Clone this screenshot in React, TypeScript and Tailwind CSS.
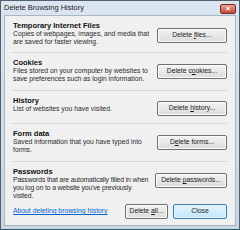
import React from "react";

const font = { fontFamily: '"Liberation Sans", Arial, sans-serif' };

function Btn({ label, w, primary }: { label: React.ReactNode; w: string; primary?: boolean }) {
  return (
    <button
      className={
        "h-[15px] shrink-0 rounded-[2px] border text-[6.8px] leading-none text-[#1a1a1a] flex items-center justify-center " +
        w +
        (primary
          ? " border-[#3c7fb1] bg-gradient-to-b from-[#eaf6fd] to-[#bee6fd] shadow-[inset_0_0_0_1px_#dff2fc]"
          : " border-[#707070] bg-gradient-to-b from-[#f2f2f2] to-[#dcdcdc] shadow-[inset_0_0_0_1px_#fbfbfb]")
      }
    >
      <span className="whitespace-pre">{label}</span>
    </button>
  );
}

function Section({
  title,
  lines,
  button,
  btnW,
  btnMt,
  pb,
  sep = true,
  tight,
}: {
  title: string;
  lines: string[];
  button: React.ReactNode;
  btnW: string;
  btnMt: string;
  pb: string;
  sep?: boolean;
  tight?: boolean;
}) {
  return (
    <>
      <div className={"flex items-start justify-between pt-[5px] " + pb}>
        <div className={tight ? "tracking-[-0.12px]" : ""}>
          <div className="text-[7.5px] font-bold leading-[9px] text-[#111] tracking-normal">{title}</div>
          {lines.map((l) => (
            <div key={l} className="text-[6.8px] leading-[8px] text-[#2b2b2b] whitespace-nowrap">
              {l}
            </div>
          ))}
        </div>
        <div className={btnMt}>
          <Btn label={button} w={btnW} />
        </div>
      </div>
      {sep && <div className="h-px bg-[#d5d5d5] -ml-px" />}
    </>
  );
}

export default function App() {
  return (
    <div
      style={font}
      className="w-[240px] h-[230px] flex flex-col border border-[#52606e] border-b-[#2e5b6b] bg-gradient-to-b from-[#dbe5ef] to-[#c9d6e3]"
    >
      <div className="h-[14px] flex items-center justify-between pl-[3px] pr-[3px]">
        <span className="text-[7.5px] text-[#1e1e1e] leading-none">Delete Browsing History</span>
        <div className="w-[16px] h-[10px] mt-[2px] rounded-[2px] border border-[#7a2a22] bg-gradient-to-b from-[#e5a192] to-[#c2453b] flex items-center justify-center text-white text-[8px] font-bold leading-none">
          ×
        </div>
      </div>
      <div className="flex-1 mx-[3px] mb-[3px] border border-[#a9b6c4] bg-[#f0f0f0] flex flex-col pl-[8px] pr-[8px]">
        <Section
          title="Temporary Internet Files"
          lines={["Copies of webpages, images, and media that", "are saved for faster viewing."]}
          button={<>Delete <u>f</u>iles...</>}
          btnW="w-[70px]"
          btnMt="mt-[7px]"
          pb="pb-[6px]"
        />
        <Section
          title="Cookies"
          lines={["Files stored on your computer by websites to", "save preferences such as login information."]}
          button={<>Delete c<u>o</u>okies...</>}
          btnW="w-[70px]"
          btnMt="mt-[6px]"
          pb="pb-[7px]"
        />
        <Section
          title="History"
          lines={["List of websites you have visited."]}
          button={<>Delete <u>h</u>istory...</>}
          btnW="w-[70px]"
          btnMt="mt-[5px]"
          pb="pb-[7px]"
        />
        <Section
          title="Form data"
          lines={["Saved information that you have typed into", "forms."]}
          button={<>D<u>e</u>lete forms...</>}
          btnW="w-[70px]"
          btnMt="mt-[6px]"
          pb="pb-[7px]"
        />
        <Section
          title="Passwords"
          lines={["Passwords that are automatically filled in when", "you log on to a website you've previously", "visited."]}
          button={<>Delete <u>p</u>asswords...</>}
          btnW="w-[72px]"
          btnMt="mt-[6px]"
          pb="pb-0"
          sep={false}
          tight
        />
        <div className="mt-auto mb-[6px] flex items-center">
          <a className="text-[6.8px] text-[#0066cc] underline leading-none whitespace-nowrap">
            About deleting browsing history
          </a>
          <div className="ml-auto flex gap-[5px]">
            <Btn label={<>Delete <u>a</u>ll...</>} w="w-[43px]" />
            <Btn label="Close" w="w-[54px]" primary />
          </div>
        </div>
      </div>
    </div>
  );
}
